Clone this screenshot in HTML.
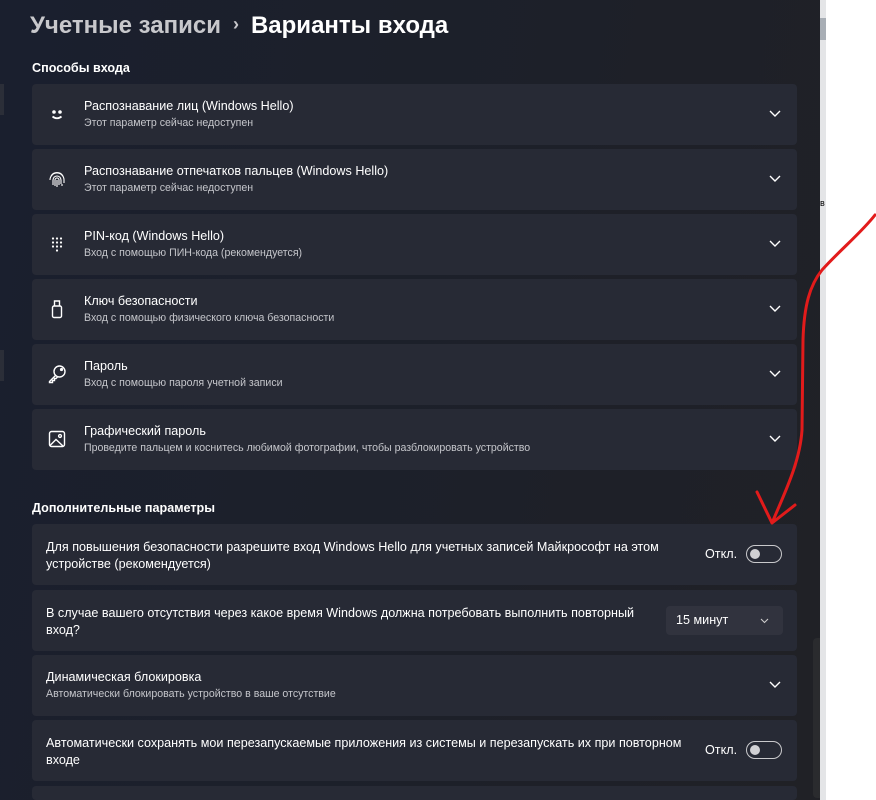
<!DOCTYPE html>
<html><head><meta charset="utf-8"><style>
*{margin:0;padding:0;box-sizing:border-box}
html,body{width:876px;height:800px;overflow:hidden}
body{background:#fff;font-family:"Liberation Sans","Noto Sans CJK SC",sans-serif;position:relative}
#win{position:absolute;left:0;top:0;width:820px;height:800px;overflow:hidden;background:linear-gradient(100deg,#1a1f2e 0%,#1d2029 60%,#202126 100%)}
.strip{position:absolute;left:820px;width:6px;background:#c9ccd0}
h1{position:absolute;top:12px;left:30px;font-size:24px;font-weight:bold;color:#fff;white-space:nowrap}
h1 span.g{color:#c8c8cc}
h1 span.c{color:#c8c8cc;font-size:18px;margin:0 12px;position:relative;top:-3px}
.sec{position:absolute;left:32px;font-size:12.6px;font-weight:bold;color:#fff}
.card{position:absolute;left:32px;width:765px;height:61px;background:#272a35;border-radius:4px;color:#fff}
.card .t{position:absolute;left:52px;top:15px;font-size:12.6px}
.card .s{position:absolute;left:52px;top:33px;font-size:10.6px;color:#c5c6cb}
.card .ic{position:absolute;left:15px;top:20px;width:20px;height:20px}
.chev{position:absolute;right:16px;top:26px;width:12px;height:8px}
.plain{position:absolute;left:14px;top:15px;font-size:12.6px;line-height:17px;width:650px}
.tog{position:absolute;width:36px;height:18px;border:1.5px solid #c9c9cc;border-radius:9px}
.tog::after{content:"";position:absolute;left:3px;top:2.5px;width:10px;height:10px;border-radius:50%;background:#d0d0d3}
.off{position:absolute;font-size:12.6px}
</style></head><body>
<div id="win">
<div style="position:absolute;left:0;top:84px;width:4px;height:31px;background:#2b2e38"></div>
<div style="position:absolute;left:0;top:350px;width:4px;height:31px;background:#2b2e38"></div>
<h1><span class="g">Учетные записи</span><span class="c">›</span>Варианты входа</h1>
<div class="sec" style="top:61px">Способы входа</div>

<div class="card" style="top:84px"><svg class="ic" viewBox="0 0 20 20" fill="none" stroke="#fff" stroke-width="1.8"><circle cx="7" cy="8" r="0.9" fill="#fff"/><circle cx="13" cy="8" r="0.9" fill="#fff"/><path d="M5.5 12.5q4.5 3.5 9 0"/></svg><div class="t">Распознавание лиц (Windows Hello)</div><div class="s">Этот параметр сейчас недоступен</div><svg class="chev" viewBox="0 0 12 8"><path d="M1 1l5 5 5-5" stroke="#fff" stroke-width="1.4" fill="none"/></svg></div>

<div class="card" style="top:149px"><svg class="ic" viewBox="0 0 20 20" fill="none" stroke="#fff" stroke-width="1.1"><path d="M4 7a7 7 0 0 1 12 0M3 11a7 7 0 0 1 14 0v3M6 16v-5a4 4 0 0 1 8 0v4M8 17v-6a2 2 0 0 1 4 0v5M10 11v7M15 15v2"/></svg><div class="t">Распознавание отпечатков пальцев (Windows Hello)</div><div class="s">Этот параметр сейчас недоступен</div><svg class="chev" viewBox="0 0 12 8"><path d="M1 1l5 5 5-5" stroke="#fff" stroke-width="1.4" fill="none"/></svg></div>

<div class="card" style="top:214px"><svg class="ic" viewBox="0 0 20 20" fill="#fff"><circle cx="6" cy="4.5" r="1.1"/><circle cx="10" cy="4.5" r="1.1"/><circle cx="14" cy="4.5" r="1.1"/><circle cx="6" cy="8.5" r="1.1"/><circle cx="10" cy="8.5" r="1.1"/><circle cx="14" cy="8.5" r="1.1"/><circle cx="6" cy="12.5" r="1.1"/><circle cx="10" cy="12.5" r="1.1"/><circle cx="14" cy="12.5" r="1.1"/><circle cx="10" cy="16.5" r="1.1"/></svg><div class="t">PIN-код (Windows Hello)</div><div class="s">Вход с помощью ПИН-кода (рекомендуется)</div><svg class="chev" viewBox="0 0 12 8"><path d="M1 1l5 5 5-5" stroke="#fff" stroke-width="1.4" fill="none"/></svg></div>

<div class="card" style="top:279px"><svg class="ic" viewBox="0 0 20 20" fill="none" stroke="#fff" stroke-width="1.4"><rect x="5.5" y="7" width="9" height="11.5" rx="1.5"/><path d="M7.5 7V2h5v5"/></svg><div class="t">Ключ безопасности</div><div class="s">Вход с помощью физического ключа безопасности</div><svg class="chev" viewBox="0 0 12 8"><path d="M1 1l5 5 5-5" stroke="#fff" stroke-width="1.4" fill="none"/></svg></div>

<div class="card" style="top:344px"><svg class="ic" viewBox="0 0 20 20" fill="none" stroke="#fff" stroke-width="1.4"><circle cx="12.5" cy="7.5" r="5.5"/><circle cx="14.5" cy="5.5" r="0.9" fill="#fff"/><path d="M8.5 11.5L2.5 17.5v1h3v-2h2v-2h1.5l1.5-1.5"/></svg><div class="t">Пароль</div><div class="s">Вход с помощью пароля учетной записи</div><svg class="chev" viewBox="0 0 12 8"><path d="M1 1l5 5 5-5" stroke="#fff" stroke-width="1.4" fill="none"/></svg></div>

<div class="card" style="top:409px"><svg class="ic" viewBox="0 0 20 20" fill="none" stroke="#fff" stroke-width="1.4"><rect x="2.5" y="2.5" width="15" height="15" rx="2"/><circle cx="13" cy="7" r="1.4"/><path d="M3 16.5l6-6 7.5 7"/></svg><div class="t">Графический пароль</div><div class="s">Проведите пальцем и коснитесь любимой фотографии, чтобы разблокировать устройство</div><svg class="chev" viewBox="0 0 12 8"><path d="M1 1l5 5 5-5" stroke="#fff" stroke-width="1.4" fill="none"/></svg></div>

<div class="sec" style="top:501px">Дополнительные параметры</div>

<div class="card" style="top:524px"><div class="plain">Для повышения безопасности разрешите вход Windows Hello для учетных записей Майкрософт на этом устройстве (рекомендуется)</div><div class="off" style="left:673px;top:23px">Откл.</div><div class="tog" style="left:714px;top:21px"></div></div>

<div class="card" style="top:590px"><div class="plain" style="width:600px">В случае вашего отсутствия через какое время Windows должна потребовать выполнить повторный вход?</div><div style="position:absolute;left:634px;top:16px;width:117px;height:29px;background:#31333e;border-radius:4px;font-size:12.6px;padding:7px 10px">15 минут<svg style="position:absolute;right:14px;top:12px" width="9" height="6" viewBox="0 0 9 6"><path d="M1 1l3.5 3.5L8 1" stroke="#ccc" stroke-width="1.1" fill="none"/></svg></div></div>

<div class="card" style="top:655px"><div class="t" style="left:14px">Динамическая блокировка</div><div class="s" style="left:14px">Автоматически блокировать устройство в ваше отсутствие</div><svg class="chev" viewBox="0 0 12 8"><path d="M1 1l5 5 5-5" stroke="#fff" stroke-width="1.4" fill="none"/></svg></div>

<div class="card" style="top:720px"><div class="plain">Автоматически сохранять мои перезапускаемые приложения из системы и перезапускать их при повторном входе</div><div class="off" style="left:673px;top:23px">Откл.</div><div class="tog" style="left:714px;top:21px"></div></div>

<div class="card" style="top:786px;height:14px"></div>
<div style="position:absolute;left:813px;top:638px;width:7px;height:160px;background:#2a2b2e;border-radius:4px 0 0 4px"></div>
</div>
<div class="strip" style="top:0;height:800px;background:#e4e5e7"></div>
<div class="strip" style="top:18px;height:22px;background:#a8aeb5"></div>
<div style="position:absolute;left:820px;top:198px;font-size:9px;color:#000">в</div>
<svg style="position:absolute;left:0;top:0" width="876" height="800"><path d="M875,215 C862,232 840,250 822,270 C810,285 804,305 803,340 L802,430 C800,462 785,492 772,523 M757,492 L772,523 L795,505" stroke="#e21b1b" stroke-width="3" fill="none" stroke-linecap="round" stroke-linejoin="round"/></svg>
</body></html>
